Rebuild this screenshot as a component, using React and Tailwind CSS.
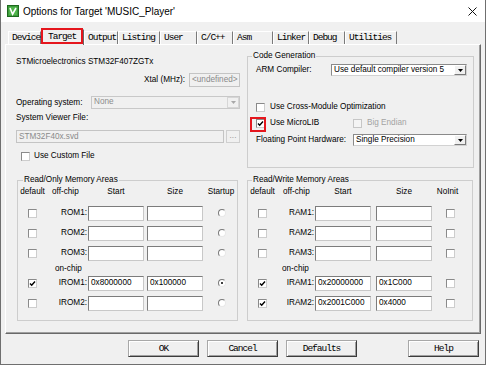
import React from "react";

const TABS = [
  { label: "Device", w: "w-[33px]" },
  { label: "Target", w: "w-[43px]", active: true },
  { label: "Output", w: "w-[34px]" },
  { label: "Listing", w: "w-[42px]" },
  { label: "User", w: "w-[37px]" },
  { label: "C/C++", w: "w-[36px]" },
  { label: "Asm", w: "w-[40px]" },
  { label: "Linker", w: "w-[36px]" },
  { label: "Debug", w: "w-[36px]" },
  { label: "Utilities", w: "w-[52px]" },
];

const ROM_ROWS = [
  { label: "ROM1:" },
  { label: "ROM2:" },
  { label: "ROM3:" },
  { label: "IROM1:", checked: true, start: "0x8000000", size: "0x100000", startup: true, onChip: true },
  { label: "IROM2:" },
];

const RAM_ROWS = [
  { label: "RAM1:" },
  { label: "RAM2:" },
  { label: "RAM3:" },
  { label: "IRAM1:", checked: true, start: "0x20000000", size: "0x1C000", onChip: true },
  { label: "IRAM2:", checked: true, start: "0x2001C000", size: "0x4000" },
];

const Check = ({ checked, disabled }) => (
  <span
    className={
      disabled
        ? "flex w-[9px] h-[9px] shrink-0 items-center justify-center border border-[#c6c6c6] bg-[#f4f4f4]"
        : "flex w-[9px] h-[9px] shrink-0 items-center justify-center border border-t-[#8a8a8a] border-l-[#8a8a8a] border-r-[#cdcdcd] border-b-[#cdcdcd] bg-white"
    }
  >
    {checked && (
      <svg width="7" height="7" viewBox="0 0 7 7">
        <path d="M1 3.4 L2.7 5.2 L6 1.5" fill="none" stroke="#000" strokeWidth="1.4" />
      </svg>
    )}
  </span>
);

const Radio = ({ checked }) => (
  <span className="flex w-[8px] h-[8px] items-center justify-center rounded-full border border-t-[#7a7a7a] border-l-[#7a7a7a] border-r-[#e8e8e8] border-b-[#e8e8e8] bg-white">
    {checked && <span className="w-[2px] h-[2px] rounded-full bg-black" />}
  </span>
);

const Field = ({ className, value, disabled }) => (
  <div
    className={
      (disabled
        ? "flex items-center border border-[#c4c4c4] bg-[#f0f0f0] text-[#8a8a8a] pl-[2px] whitespace-nowrap overflow-hidden "
        : "flex items-center border border-t-[#7c7c7c] border-l-[#7c7c7c] border-r-[#c8c8c8] border-b-[#c8c8c8] bg-white pl-[2px] whitespace-nowrap overflow-hidden ") +
      className
    }
  >
    {value}
  </div>
);

const Select = ({ className, value, disabled }) => (
  <div
    className={
      (disabled
        ? "flex items-stretch border border-[#c8c8c8] bg-[#f0f0f0] text-[#8c8c8c] "
        : "flex items-stretch border border-t-[#8a8a8a] border-l-[#8a8a8a] border-r-[#d2d2d2] border-b-[#d2d2d2] bg-white ") +
      className
    }
  >
    <span className="flex-1 pl-[2px] whitespace-nowrap overflow-hidden leading-[10px]">{value}</span>
    <span
      className={
        disabled
          ? "flex w-[12px] items-center justify-center border border-[#d6d6d6] bg-[#f0f0f0]"
          : "flex w-[12px] items-center justify-center border border-t-white border-l-white border-r-[#7a7a7a] border-b-[#7a7a7a] bg-[#f0f0f0]"
      }
    >
      <svg width="5" height="3" viewBox="0 0 5 3">
        <polygon points="0,0 5,0 2.5,3" fill={disabled ? "#a8a8a8" : "#000"} />
      </svg>
    </span>
  </div>
);

const DlgButton = ({ children, className = "" }) => (
  <button className={"w-[71px] h-[17px] border border-t-[#a8a8a8] border-l-[#a8a8a8] border-r-[#3c3c3c] border-b-[#3c3c3c] bg-[#f0f0f0] shadow-[inset_1px_1px_0_#fff,inset_-1px_-1px_0_#a0a0a0] leading-[13px] " + className}>
    {children}
  </button>
);

export default function App() {
  return (
    <div className="w-[486px] h-[365px] bg-[#f0f0f0] border-x border-b border-[#6f6f6f] flex flex-col overflow-hidden font-['Liberation_Sans',Arial,sans-serif] text-[8.2px] leading-[12px] text-black">
      {/* title bar */}
      <div className="h-[22px] shrink-0 bg-white flex items-center pl-[6px] pr-[8px]">
        <svg width="12" height="12" viewBox="0 0 12 12">
          <rect x="0.5" y="0.5" width="11" height="11" fill="#3d9b3b" stroke="#1e6a1e" />
          <rect x="2" y="2" width="8" height="8" fill="#4fb44b" />
          <path d="M3 3 L5.6 9.2 L9 3" fill="none" stroke="#fff" strokeWidth="1.6" />
        </svg>
        <span className="ml-[4px] mt-[2px] text-[10px] leading-[12px]">Options for Target 'MUSIC_Player'</span>
        <svg className="ml-auto mt-[1px]" width="9" height="9" viewBox="0 0 9 9">
          <path d="M0.5 0.5 L8.5 8.5 M8.5 0.5 L0.5 8.5" stroke="#111" strokeWidth="1" />
        </svg>
      </div>

      {/* tabs */}
      <div className="h-[22px] shrink-0 flex items-end pl-[7px] font-['Liberation_Mono',monospace] text-[9.5px] tracking-[-1px]">
        {TABS.map((t) =>
          t.active ? (
            <div
              key={t.label}
              className={"relative z-10 -mb-px h-[16px] shrink-0 bg-[#f0f0f0] border-t border-l border-r border-t-white border-l-white border-r-[#696969] pl-[6px] pt-[1px] leading-[11px] " + t.w}
            >
              {t.label}
              <span className="absolute left-[-1px] top-[-2px] w-[42px] h-[16px] border-2 border-[#e5161d]" />
            </div>
          ) : (
            <div
              key={t.label}
              className={"h-[13px] shrink-0 border-t border-l border-r border-t-white border-l-white border-r-[#7a7a7a] pl-[3px] leading-[11px] " + t.w}
            >
              {t.label}
            </div>
          )
        )}
      </div>

      {/* tab panel */}
      <div className="ml-[4px] w-[476px] h-[290px] shrink-0 border border-t-white border-l-white border-r-[#696969] border-b-[#696969] shadow-[inset_-1px_-1px_0_#a0a0a0] flex flex-col">
        <div className="flex items-start">
          {/* device info */}
          <div className="ml-[10px] mt-[11px] w-[224px] flex flex-col">
            <div className="h-[12px]">STMicroelectronics STM32F407ZGTx</div>
            <div className="mt-[5px] h-[14px] flex items-center justify-end">
              <span>Xtal (MHz):</span>
              <Field className="ml-[4px] w-[51px] h-[14px]" value="<undefined>" disabled />
            </div>
            <div className="mt-[9px] h-[13px] flex items-center">
              <span className="w-[75px]">Operating system:</span>
              <Select className="w-[149px] h-[13px]" value="None" disabled />
            </div>
            <div className="mt-[3px] h-[12px]">System Viewer File:</div>
            <div className="mt-[6px] h-[13px] flex">
              <Field className="w-[208px] h-[13px]" value="STM32F40x.svd" disabled />
              <div className="ml-[2px] w-[14px] h-[13px] border border-[#cfcfcf] bg-[#f0f0f0] text-[#9a9a9a] text-center leading-[10px]">...</div>
            </div>
            <div className="mt-[7px] h-[12px] flex items-center pl-[5px]">
              <Check />
              <span className="ml-[4px]">Use Custom File</span>
            </div>
          </div>

          {/* code generation */}
          <fieldset className="ml-[7px] mt-[6px] w-[227px] h-[117px] border border-[#cdcdcd]">
            <legend className="ml-[4px] px-[1px] leading-[10px]">Code Generation</legend>
            <div className="pl-[8px] pt-[3px]">
              <div className="h-[12px] flex items-center">
                <span className="w-[75px]">ARM Compiler:</span>
                <Select className="w-[136px] h-[12px]" value="Use default compiler version 5" />
              </div>
              <div className="mt-[25px] h-[12px] flex items-center">
                <Check />
                <span className="ml-[5px]">Use Cross-Module Optimization</span>
              </div>
              <div className="mt-[4px] h-[12px] flex items-center">
                <span className="relative flex">
                  <Check checked />
                  <span className="absolute left-[-6px] top-[-2px] w-[16px] h-[15px] border-2 border-[#e5161d]" />
                </span>
                <span className="ml-[5px] w-[83px]">Use MicroLIB</span>
                <Check disabled />
                <span className="ml-[5px] text-[#a3a3a3]">Big Endian</span>
              </div>
              <div className="mt-[5px] h-[12px] flex items-center">
                <span className="w-[97px]">Floating Point Hardware:</span>
                <Select className="w-[114px] h-[12px]" value="Single Precision" />
              </div>
            </div>
          </fieldset>
        </div>

        <div className="mt-[7px] flex">
          {/* read only */}
          <fieldset className="ml-[11px] w-[221px] h-[146px] border border-[#cdcdcd]">
            <legend className="ml-[5px] px-[1px] leading-[10px]">Read/Only Memory Areas</legend>
            <div className="pt-[1px] pl-[10px]">
              <div className="h-[12px] flex items-center">
                <span className="w-[9px] flex justify-center whitespace-nowrap">default</span>
                <span className="w-[51px] pl-[15px] whitespace-nowrap">off-chip</span>
                <span className="w-[56px] text-center">Start</span>
                <span className="ml-[3px] w-[56px] text-center">Size</span>
                <span className="ml-[15px] w-[6px] flex justify-center whitespace-nowrap">Startup</span>
              </div>
              {ROM_ROWS.map((r, i) => (
                <React.Fragment key={r.label}>
                  {r.onChip && <div className="mt-[2px] h-[12px] pl-[27px]">on-chip</div>}
                  <div className={(i === 0 ? "mt-[7px] " : r.onChip ? "mt-0 " : "mt-[4px] ") + "h-[16px] flex items-center"}>
                    <Check checked={r.checked} />
                    <span className="w-[51px] pr-[1px] text-right">{r.label}</span>
                    <Field className="w-[56px] h-[15px]" value={r.start} />
                    <Field className="ml-[3px] w-[56px] h-[15px]" value={r.size} />
                    <span className="ml-[15px] flex">
                      <Radio checked={r.startup} />
                    </span>
                  </div>
                </React.Fragment>
              ))}
            </div>
          </fieldset>

          {/* read write */}
          <fieldset className="ml-[9px] w-[226px] h-[146px] border border-[#cdcdcd]">
            <legend className="ml-[4px] px-[1px] leading-[10px]">Read/Write Memory Areas</legend>
            <div className="pt-[1px] pl-[10px]">
              <div className="h-[12px] flex items-center">
                <span className="w-[9px] flex justify-center whitespace-nowrap">default</span>
                <span className="w-[48px] pl-[16px] whitespace-nowrap">off-chip</span>
                <span className="w-[56px] text-center">Start</span>
                <span className="ml-[5px] w-[56px] text-center">Size</span>
                <span className="ml-[14px] w-[3px] flex justify-center whitespace-nowrap">NoInit</span>
              </div>
              {RAM_ROWS.map((r, i) => (
                <React.Fragment key={r.label}>
                  {r.onChip && <div className="mt-[2px] h-[12px] pl-[24px]">on-chip</div>}
                  <div className={(i === 0 ? "mt-[7px] " : r.onChip ? "mt-0 " : "mt-[4px] ") + "h-[16px] flex items-center"}>
                    <Check checked={r.checked} />
                    <span className="w-[48px] pr-[1px] text-right">{r.label}</span>
                    <Field className="w-[56px] h-[15px]" value={r.start} />
                    <Field className="ml-[5px] w-[56px] h-[15px]" value={r.size} />
                    <span className="ml-[14px] flex">
                      <Check />
                    </span>
                  </div>
                </React.Fragment>
              ))}
            </div>
          </fieldset>
        </div>
      </div>

      {/* dialog buttons */}
      <div className="flex pt-[6px] pl-[127px] font-['Liberation_Mono',monospace] text-[9.5px] tracking-[-1px]">
        <DlgButton>OK</DlgButton>
        <DlgButton className="ml-[8px]">Cancel</DlgButton>
        <DlgButton className="ml-[8px]">Defaults</DlgButton>
        <DlgButton className="ml-[51px]">Help</DlgButton>
      </div>
    </div>
  );
}
